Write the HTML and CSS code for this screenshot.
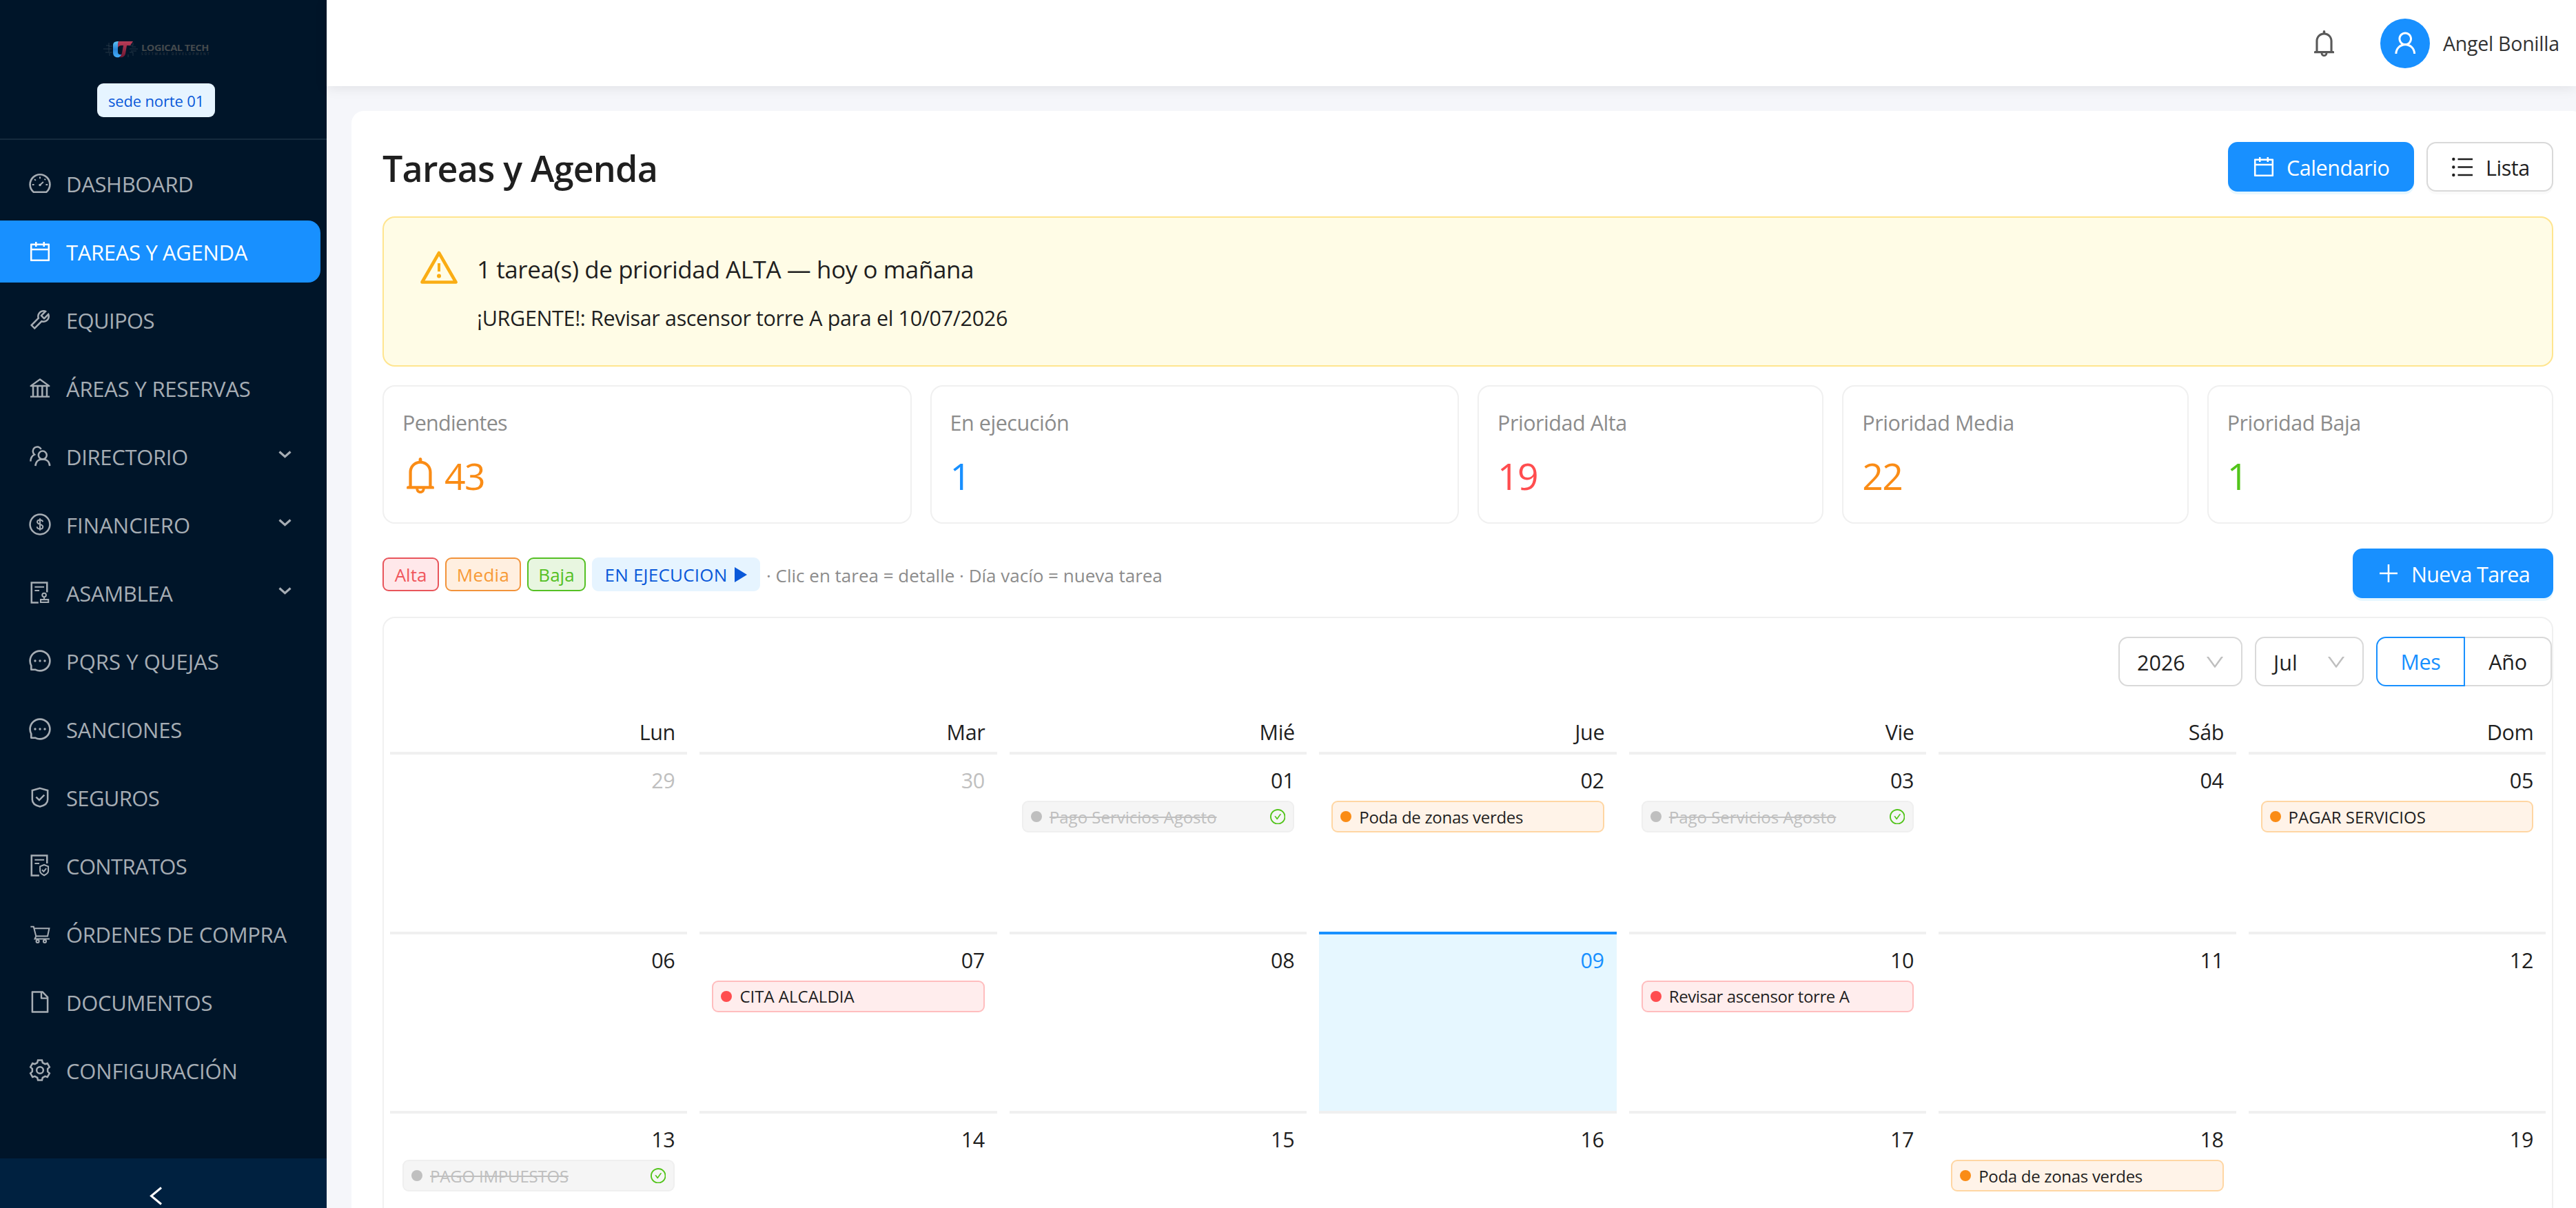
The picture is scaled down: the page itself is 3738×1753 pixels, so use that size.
FILE: index.html
```
<!DOCTYPE html>
<html lang="es">
<head>
<meta charset="utf-8">
<title>Tareas y Agenda</title>
<link rel="stylesheet" href="styles.css">
</head>
<body>
<svg class="sprite" aria-hidden="true">
  <symbol id="i-calendar" viewBox="0 0 1024 1024"><path d="M880 184H712v-64c0-4.400-3.600-8-8-8h-56c-4.400 0-8 3.600-8 8v64H384v-64c0-4.400-3.600-8-8-8h-56c-4.400 0-8 3.600-8 8v64H144c-17.700 0-32 14.300-32 32v664c0 17.700 14.300 32 32 32h736c17.700 0 32-14.300 32-32V216c0-17.700-14.300-32-32-32zm-40 656H184V460h656v380zM184 392V256h128v48c0 4.400 3.600 8 8 8h56c4.400 0 8-3.600 8-8v-48h256v48c0 4.400 3.600 8 8 8h56c4.400 0 8-3.600 8-8v-48h128v136H184z"/></symbol>
  <symbol id="i-bell" viewBox="176 72 672 880"><path d="M816 768h-24V428c0-141.100-104.300-257.800-240-277.200V112c0-22.100-17.900-40-40-40s-40 17.900-40 40v38.800C336.300 170.200 232 286.900 232 428v340h-24c-17.700 0-32 14.300-32 32v32c0 4.400 3.600 8 8 8h216c0 61.800 50.200 112 112 112s112-50.200 112-112h216c4.400 0 8-3.600 8-8v-32c0-17.700-14.300-32-32-32zM512 888c-26.500 0-48-21.500-48-48h96c0 26.500-21.500 48-48 48zM304 768V428c0-55.600 21.600-107.800 60.900-147.100S456.400 220 512 220c55.600 0 107.800 21.600 147.100 60.900S720 372.400 720 428v340H304z"/></symbol>
  <symbol id="i-check" viewBox="64 64 896 896"><path d="M699 353h-46.900c-10.200 0-19.900 4.900-25.900 13.300L469 584.300l-71.200-98.800c-6-8.300-15.600-13.300-25.900-13.300H325c-6.500 0-10.300 7.400-6.500 12.700l124.600 172.800a31.800 31.800 0 0 0 51.700 0l210.600-292c3.900-5.300.1-12.700-6.400-12.700z"/><path d="M512 64C264.600 64 64 264.600 64 512s200.600 448 448 448 448-200.600 448-448S759.400 64 512 64zm0 820c-205.400 0-372-166.600-372-372s166.600-372 372-372 372 166.600 372 372-166.600 372-372 372z"/></symbol>
  <symbol id="i-down" viewBox="128 256 768 512"><path d="M884 256h-75c-5.100 0-9.900 2.500-12.900 6.600L512 654.200 227.900 262.600c-3-4.100-7.800-6.600-12.900-6.600h-75c-6.500 0-10.300 7.400-6.500 12.700l352.600 486.100c12.800 17.600 39 17.600 51.700 0l352.600-486.100c3.900-5.300.1-12.700-6.400-12.700z"/></symbol>
  <symbol id="i-message" viewBox="0 0 1024 1024"><path d="M464 512a48 48 0 1 0 96 0 48 48 0 1 0-96 0zm200 0a48 48 0 1 0 96 0 48 48 0 1 0-96 0zm-400 0a48 48 0 1 0 96 0 48 48 0 1 0-96 0z"/><path d="M925.200 338.400c-22.600-53.700-55-101.900-96.300-143.300a444.350 444.350 0 0 0-143.300-96.300C630.600 75.700 572.200 64 512 64h-2c-60.600.3-119.300 12.300-174.500 35.900a445.350 445.350 0 0 0-142 96.500c-40.900 41.300-73 89.300-95.200 142.800-23 55.400-34.600 114.300-34.300 174.900A449.400 449.400 0 0 0 112 714v152a46 46 0 0 0 46 46h152.100A449.400 449.400 0 0 0 510 960h2.100c59.900 0 118-11.600 172.700-34.300a444.480 444.480 0 0 0 142.800-95.200c41.300-40.900 73.800-88.700 96.500-142 23.600-55.200 35.600-113.900 35.900-174.500.3-60.900-11.500-120-34.800-175.600zm-151.100 438C704 845.800 611 884 512 884h-1.700c-60.300-.3-120.200-15.300-173.100-43.500l-8.400-4.500H188V695.200l-4.500-8.400C155.300 633.900 140.300 574 140 513.700c-.4-99.700 37.700-193.300 107.600-263.800 69.800-70.500 163.100-109.500 262.800-109.900h1.700c50 0 98.500 9.700 144.200 28.900 44.600 18.700 84.600 45.600 119 80 34.300 34.300 61.300 74.400 80 119 19.400 46.200 29.100 95.200 28.900 145.800-.6 99.600-39.700 192.900-110.100 262.700z"/></symbol>
</svg>

<div class="app">
  <aside class="sidebar">
    <div class="brand">
      <svg class="brand-logo" viewBox="0 0 160 30">
        <defs>
          <linearGradient id="blue" x1="0" y1="0" x2="0" y2="1"><stop offset="0" stop-color="#5cc4f5"/><stop offset=".5" stop-color="#2b84d6"/><stop offset="1" stop-color="#43aefa"/></linearGradient>
          <linearGradient id="red" x1="0" y1="0" x2="0" y2="1"><stop offset="0" stop-color="#b83d58"/><stop offset="1" stop-color="#6d1631"/></linearGradient>
        </defs>
        <g fill="none" stroke="#2c3d4d" stroke-width=".8">
          <path d="M3 15h12M7 10h4v5M6 20h5v-5M11 6v5h5M12 25v-5h4M41 15h12M41 10h5V6M44 12h6M41 20h5v5M43 18h8M39 23v4"/>
        </g>
        <path d="M25 4c-6 0-8 2-8 6v10c0 6 4 8 9 7l5-4c-5 1-7 0-7-4V9z" fill="url(#blue)"/>
        <path d="M25 4h21l-4 6h-5l-2 12c-1 4-4 6-9 5 2-1 3-3 4-6l2-11h-3c-2 0-4 1-5 3 0-4 0-7 1-9z" fill="url(#red)"/>
        <text class="brand-name" x="58" y="18" textLength="98" lengthAdjust="spacingAndGlyphs">LOGICAL TECH</text>
        <text class="brand-sub" x="58" y="23.500" textLength="98">SOFTWARE DEVELOPMENT</text>
      </svg>
      <span class="site-tag">sede norte 01</span>
    </div>
    <nav class="menu">
      <a class="item"><svg class="ico" viewBox="0 0 1024 1024"><path d="M924.800 385.600a446.700 446.700 0 0 0-96-142.400 446.700 446.700 0 0 0-142.400-96C631.100 123.800 572.500 112 512 112s-119.100 11.800-174.400 35.200a446.700 446.700 0 0 0-142.400 96 446.700 446.700 0 0 0-96 142.400C75.800 440.900 64 499.500 64 560c0 132.700 58.300 257.700 159.900 343.100l1.700 1.400c5.800 4.800 13.100 7.500 20.600 7.500h531.700c7.500 0 14.800-2.700 20.600-7.500l1.700-1.400C901.700 817.700 960 692.700 960 560c0-60.500-11.900-119.100-35.200-174.400zM761.400 836H262.600A371.120 371.120 0 0 1 140 560c0-99.400 38.700-192.800 109-263 70.300-70.300 163.700-109 263-109 99.400 0 192.800 38.700 263 109 70.300 70.300 109 163.700 109 263 0 105.600-44.500 205.500-122.600 276z"/><g class="line thin"><path d="M512 242v80M192 570h80M752 570h80M286 345l50 50M510 585l140-130M700 372l38-38"/></g><circle cx="512" cy="585" r="50"/></svg><span>DASHBOARD</span></a>
      <a class="item active"><svg class="ico"><use href="#i-calendar"/></svg><span>TAREAS Y AGENDA</span></a>
      <a class="item tight"><svg class="ico" viewBox="0 0 1024 1024"><path d="M876.600 239.500c-.5-.9-1.200-1.800-2-2.500-5-5-13.100-5-18.100 0L684.200 409.300l-67.900-67.900L788.700 169c.8-.8 1.400-1.600 2-2.500 3.600-6.100 1.600-13.900-4.500-17.500-98.200-58-226.800-44.700-311.300 39.700-67 67-89.200 162-66.500 247.400l-293 293c-3 3-2.800 7.900.3 11l169.700 169.700c3.100 3.100 8.100 3.300 11 .3l292.900-292.900c85.500 22.800 180.500.7 247.600-66.400 84.400-84.500 97.700-213.100 39.700-311.300zM786 499.800c-58.100 58.100-145.300 69.300-214.600 33.600l-8.800 8.800-.1-.1-274 274.100-79.200-79.200 230.100-230.100s0 .1.1.1l52.800-52.800c-35.700-69.300-24.500-156.500 33.600-214.600a184.200 184.200 0 0 1 144-53.500L537 318.900a32.050 32.050 0 0 0 0 45.300l124.500 124.500a32.050 32.050 0 0 0 45.300 0l132.800-132.800c3.700 51.800-14.400 104.800-53.600 143.900z"/></svg><span>EQUIPOS</span></a>
      <a class="item wide"><svg class="ico" viewBox="0 0 1024 1024"><path d="M894 462c30.900 0 43.800-39.700 18.700-58L530.800 126.200a31.810 31.810 0 0 0-37.600 0L111.300 404c-25.100 18.200-12.200 58 18.800 58H192v374h-72c-4.400 0-8 3.600-8 8v52c0 4.400 3.600 8 8 8h784c4.400 0 8-3.600 8-8v-52c0-4.400-3.600-8-8-8h-72V462h62zM512 196.700l271.100 197.200H240.900L512 196.700zM264 462h117v374H264V462zm189 0h117v374H453V462zm307 374H642V462h118v374z"/></svg><span>ÁREAS Y RESERVAS</span></a>
      <a class="item"><svg class="ico" viewBox="0 0 1024 1024"><g class="line"><circle cx="620" cy="470" r="170"/><path d="M325 912C335 740 450 640 620 640S905 740 915 912M560 225A180 180 0 1 0 285 445C190 490 130 600 124 725"/></g></svg><span>DIRECTORIO</span><svg class="chev" viewBox="0 0 19 11"><path d="M1.500 1.500 9.500 8.700 17.500 1.500"/></svg></a>
      <a class="item wider"><svg class="ico" viewBox="0 0 1024 1024"><g class="line"><circle cx="512" cy="512" r="410"/></g><g class="line thin"><path d="M630 405C620 350 575 325 512 325c-65 0-112 32-112 88 0 120 232 70 232 195 0 62-52 92-120 92s-118-35-122-95M512 262v500"/></g></svg><span>FINANCIERO</span><svg class="chev" viewBox="0 0 19 11"><path d="M1.500 1.500 9.500 8.700 17.500 1.500"/></svg></a>
      <a class="item"><svg class="ico" viewBox="0 0 1024 1024"><g class="line"><path d="M450 924H164V100h640v400"/></g><g class="line thin"><path d="M295 280h390M295 425h190M685 690v105M540 800h320v112H540z"/><circle cx="685" cy="615" r="80"/></g></svg><span>ASAMBLEA</span><svg class="chev" viewBox="0 0 19 11"><path d="M1.500 1.500 9.500 8.700 17.500 1.500"/></svg></a>
      <a class="item wider"><svg class="ico"><use href="#i-message"/></svg><span>PQRS Y QUEJAS</span></a>
      <a class="item wide"><svg class="ico"><use href="#i-message"/></svg><span>SANCIONES</span></a>
      <a class="item tight"><svg class="ico" viewBox="0 0 1024 1024"><g class="line"><path d="M512 138 830 226v380c0 170-130 250-318 292C324 856 194 776 194 606V226zM352 500l130 128 210-210"/></g></svg><span>SEGUROS</span></a>
      <a class="item tight"><svg class="ico" viewBox="0 0 1024 1024"><g class="line"><path d="M480 924H164V100h640v330"/></g><g class="line thin"><path d="M295 280h390M295 425h190M685 482 855 550v190c0 82-76 130-170 178-94-48-170-96-170-178V550zM595 690l70 68 110-128"/></g></svg><span>CONTRATOS</span></a>
      <a class="item"><svg class="ico" viewBox="0 0 1024 1024"><g class="line thin"><path d="M124 222h125l105 410M275 290h618l-66 320H350L300 728h610"/><circle cx="415" cy="822" r="58"/><circle cx="710" cy="822" r="58"/></g></svg><span>ÓRDENES DE COMPRA</span></a>
      <a class="item"><svg class="ico" viewBox="0 0 1024 1024"><path d="M854.600 288.600L639.400 73.400c-6-6-14.100-9.400-22.600-9.400H192c-17.700 0-32 14.300-32 32v832c0 17.700 14.300 32 32 32h640c17.700 0 32-14.300 32-32V311.300c0-8.500-3.400-16.700-9.400-22.700zM790.200 326H602V137.800L790.200 326zm1.800 562H232V136h302v216a42 42 0 0 0 42 42h216v494z"/></svg><span>DOCUMENTOS</span></a>
      <a class="item wide"><svg class="ico" viewBox="0 0 1024 1024"><g class="line" transform="translate(512 512)"><path d="M-109-311-84-412H84L109-311 211-250 307-284 393-130 318-58V58L393 130 307 284 211 250 109 311 84 412H-84L-109 311-211 250-307 284-393 130-318 58V-58L-393-130-307-284-211-250z"/><circle r="138"/></g></svg><span>CONFIGURACIÓN</span></a>
    </nav>
    <div class="collapse"><svg viewBox="0 0 18 27"><path d="M17 1.500 2.500 13.500 17 25.500"/></svg></div>
  </aside>

  <div class="main">
    <header class="topbar">
      <svg class="top-bell"><use href="#i-bell"/></svg>
      <span class="avatar"><svg viewBox="0 0 1024 1024"><path d="M858.500 763.600a374 374 0 0 0-80.600-119.500 375.630 375.630 0 0 0-119.500-80.600c-.4-.2-.8-.3-1.200-.5C719.500 518 760 444.700 760 362c0-137-111-248-248-248S264 225 264 362c0 82.700 40.500 156 102.800 201.100-.4.2-.8.3-1.200.5-44.800 18.900-85 46-119.500 80.600a375.630 375.630 0 0 0-80.600 119.500A371.700 371.700 0 0 0 136 901.800a8 8 0 0 0 8 8.200h60c4.400 0 7.900-3.500 8-7.800 2-77.200 33-149.500 87.800-204.300 56.700-56.700 132-87.900 212.200-87.900s155.500 31.200 212.200 87.900C779 752.700 810 825 812 902.200c.1 4.400 3.600 7.800 8 7.800h60a8 8 0 0 0 8-8.200c-1-47.800-10.900-94.300-29.500-138.200zM512 534c-45.900 0-89.100-17.900-121.600-50.400S340 407.900 340 362c0-45.900 17.900-89.100 50.400-121.600S466.100 190 512 190s89.100 17.900 121.600 50.400S684 316.100 684 362c0 45.900-17.900 89.100-50.400 121.600S557.900 534 512 534z"/></svg></span>
      <span class="user">Angel Bonilla</span>
    </header>

    <section class="panel">
      <div class="title-row">
        <h1>Tareas y Agenda</h1>
        <div class="views">
          <button class="btn primary calendar-btn"><svg class="ico"><use href="#i-calendar"/></svg><span>Calendario</span></button>
          <button class="btn list-btn"><svg class="list-ico" viewBox="0 0 30 30"><path d="M8.500 4H30M8.500 15.500H30M8.500 27H30"/><circle cx="2.300" cy="4" r="2.200"/><circle cx="2.300" cy="15.500" r="2.200"/><circle cx="2.300" cy="27" r="2.200"/></svg><span>Lista</span></button>
        </div>
      </div>

      <div class="alert">
        <svg class="warn" viewBox="0 0 54 48"><path class="tri" d="M27 3 51.500 45.500H2.500z"/><path class="mark" d="M27 18v12"/><circle cx="27" cy="36.500" r="3"/></svg>
        <div class="alert-text">
          <p class="alert-title">1 tarea(s) de prioridad ALTA — hoy o mañana</p>
          <p class="alert-body">¡URGENTE!: Revisar ascensor torre A para el 10/07/2026</p>
        </div>
      </div>

      <div class="stats">
        <div class="stat"><p>Pendientes</p><div class="num orange"><svg><use href="#i-bell"/></svg>43</div></div>
        <div class="stat"><p>En ejecución</p><div class="num blue">1</div></div>
        <div class="stat"><p>Prioridad Alta</p><div class="num red">19</div></div>
        <div class="stat"><p>Prioridad Media</p><div class="num orange">22</div></div>
        <div class="stat"><p>Prioridad Baja</p><div class="num green">1</div></div>
      </div>

      <div class="legend">
        <span class="tag high">Alta</span>
        <span class="tag mid">Media</span>
        <span class="tag low">Baja</span>
        <span class="tag run">EN EJECUCION<svg viewBox="0 0 18 22"><path d="M0 0 18 11 0 22z"/></svg></span>
        <span class="hint">· Clic en tarea = detalle · Día vacío = nueva tarea</span>
        <button class="btn primary new-btn"><svg class="plus" viewBox="0 0 26 26"><path d="M13 0V26M0 13H26"/></svg><span>Nueva Tarea</span></button>
      </div>

      <div class="calendar">
        <div class="cal-head">
          <div class="select year">2026<svg><use href="#i-down"/></svg></div>
          <div class="select month">Jul<svg><use href="#i-down"/></svg></div>
          <div class="modes"><span class="mode on">Mes</span><span class="mode">Año</span></div>
        </div>
        <div class="grid week">
          <span>Lun</span><span>Mar</span><span>Mié</span><span>Jue</span><span>Vie</span><span>Sáb</span><span>Dom</span>
        </div>
        <div class="grid days">
          <div class="day out"><b>29</b></div>
          <div class="day out"><b>30</b></div>
          <div class="day"><b>01</b><div class="event done"><i></i><s>Pago Servicios Agosto</s><svg><use href="#i-check"/></svg></div></div>
          <div class="day"><b>02</b><div class="event media"><i></i>Poda de zonas verdes</div></div>
          <div class="day"><b>03</b><div class="event done"><i></i><s>Pago Servicios Agosto</s><svg><use href="#i-check"/></svg></div></div>
          <div class="day"><b>04</b></div>
          <div class="day"><b>05</b><div class="event media caps"><i></i>PAGAR SERVICIOS</div></div>
          <div class="day"><b>06</b></div>
          <div class="day"><b>07</b><div class="event alta caps"><i></i>CITA ALCALDIA</div></div>
          <div class="day"><b>08</b></div>
          <div class="day today"><b>09</b></div>
          <div class="day"><b>10</b><div class="event alta"><i></i>Revisar ascensor torre A</div></div>
          <div class="day"><b>11</b></div>
          <div class="day"><b>12</b></div>
          <div class="day"><b>13</b><div class="event done tight"><i></i><s>PAGO IMPUESTOS</s><svg><use href="#i-check"/></svg></div></div>
          <div class="day"><b>14</b></div>
          <div class="day"><b>15</b></div>
          <div class="day"><b>16</b></div>
          <div class="day"><b>17</b></div>
          <div class="day"><b>18</b><div class="event media"><i></i>Poda de zonas verdes</div></div>
          <div class="day"><b>19</b></div>
        </div>
      </div>
    </section>
  </div>
</div>
</body>
</html>
```
FILE: styles.css
```
* { box-sizing: border-box; }

body {
  margin: 0;
  font-family: "Open Sans", "Noto Sans", sans-serif;
  font-size: 30.5px;
  letter-spacing: -0.35px;
  color: #1f1f1f;
  background: #f5f6fa;
  white-space: nowrap;
}

h1, p { margin: 0; }
svg { display: block; flex: none; fill: currentColor; }
.sprite { position: absolute; width: 0; height: 0; }
.ico { width: 36px; height: 36px; }
.line { fill: none; stroke: currentColor; stroke-width: 72; }
.thin { stroke-width: 58; }

.app { display: flex; height: 1753px; overflow: hidden; }

/* Sidebar */
.sidebar {
  flex: none;
  display: flex;
  flex-direction: column;
  width: 474px;
  height: 1789px;
  background: #001529;
  color: #a6adb4;
}
.brand {
  display: flex;
  flex-direction: column;
  align-items: center;
  gap: 35px;
  height: 203px;
  padding: 56px 21px 0 0;
  border-bottom: 2px solid #152a3d;
}
.brand-logo { width: 160px; height: 30px; }
.brand-name { font: 700 12.5px "Open Sans", sans-serif; fill: #454a4d; }
.brand-sub { font: 600 4.6px "Open Sans", sans-serif; fill: #2c3843; }
.site-tag {
  width: 171px;
  height: 49px;
  border-radius: 9px;
  background: #e6f4ff;
  color: #0958d9;
  font-size: 22px;
  line-height: 50px;
  letter-spacing: -0.15px;
  text-align: center;
}
.menu { display: flex; flex-direction: column; gap: 9px; padding: 18px 9px 0 0; }
.item {
  display: flex;
  align-items: center;
  height: 90px;
  padding: 0 42px 0 40px;
  border-radius: 0 18px 18px 0;
  font-size: 31px;
  letter-spacing: -0.33px;
}
.item span { margin-left: 20px; padding-top: 2px; }
.item.active { background: #1890ff; color: #fff; }
.item.tight { letter-spacing: -0.65px; }
.item.wide { letter-spacing: -0.2px; }
.item.wider { letter-spacing: 0.05px; }
.chev { width: 19px; height: 11px; margin: 0 0 5px auto; fill: none; stroke: currentColor; stroke-width: 3.2; }
.collapse {
  display: flex;
  align-items: center;
  justify-content: center;
  height: 108px;
  margin-top: auto;
  padding-right: 22px;
  background: #002140;
}
.collapse svg { width: 18px; height: 27px; fill: none; stroke: #fff; stroke-width: 3; }

/* Header */
.main { flex: 1; min-width: 0; }
.topbar {
  display: flex;
  align-items: center;
  justify-content: flex-end;
  height: 125px;
  background: #fff;
  box-shadow: 0 2px 18px rgba(0, 0, 0, 0.09);
}
.top-bell { width: 29px; height: 38px; margin-right: 67px; color: #595959; }
.avatar {
  display: flex;
  align-items: center;
  justify-content: center;
  width: 72px;
  height: 72px;
  border-radius: 50%;
  background: #1890ff;
  color: #fff;
}
.avatar svg { width: 40.5px; height: 40.5px; }
.user { width: 193px; margin-left: 19px; padding-top: 1px; font-size: 28.5px; letter-spacing: -0.25px; color: #333; }

/* Panel */
.panel {
  width: 3240px;
  height: 1700px;
  margin: 36px 0 0 36px;
  padding: 45px;
  border-radius: 18px;
  background: #fff;
}
.title-row { display: flex; justify-content: space-between; height: 72px; }
h1 { padding-top: 3px; font-size: 52px; font-weight: 600; line-height: 70px; letter-spacing: -0.8px; }
.views { display: flex; gap: 18px; }
.btn {
  display: flex;
  align-items: center;
  height: 72px;
  padding: 0;
  border: 2px solid #d9d9d9;
  border-radius: 14px;
  background: #fff;
  box-shadow: 0 4px 0 rgba(0, 0, 0, 0.02);
  color: inherit;
  font: inherit;
  letter-spacing: -0.45px;
}
.btn.primary { border-color: #1890ff; background: #1890ff; box-shadow: 0 4px 0 rgba(5, 175, 255, 0.1); color: #fff; }
.btn span { padding-top: 1px; }
.calendar-btn { width: 270px; padding-left: 32px; }
.calendar-btn span { margin-left: 15px; }
.list-btn { width: 184px; padding-left: 35px; }
.list-btn span { margin-left: 19px; }
.list-ico { width: 30px; height: 30px; }
.list-ico path { fill: none; stroke: currentColor; stroke-width: 2.6; }

.alert {
  display: flex;
  gap: 28px;
  margin-top: 36px;
  padding: 48px 53px 44px;
  border: 2px solid #ffe58f;
  border-radius: 18px;
  background: #fffce6;
}
.warn { width: 54px; height: 48px; color: #faad14; }
.warn .tri { fill: none; stroke: currentColor; stroke-width: 4.6; stroke-linejoin: round; }
.warn .mark { stroke: currentColor; stroke-width: 4; }
.alert-text { display: flex; flex-direction: column; gap: 20px; padding-top: 2px; line-height: 50px; }
.alert-title { font-size: 35px; letter-spacing: -0.42px; }

.stats {
  display: grid;
  grid-template-columns: 767fr 767fr 502fr 502fr 502fr;
  gap: 27px;
  margin-top: 27px;
}
.stat { height: 201px; padding: 27px; border: 2px solid #f0f0f0; border-radius: 18px; }
.stat p { line-height: 50px; color: #8c8c8c; letter-spacing: -0.45px; }
.stat:first-child p { letter-spacing: -0.7px; }
.num { display: flex; align-items: center; margin-top: 13px; font-size: 53.5px; line-height: 80px; letter-spacing: -1.6px; }
.num svg { width: 40px; height: 52px; margin: 0 15px 2px 6px; }
.orange { color: #fa8c16; }
.blue { color: #1890ff; }
.red { color: #ff4d4f; }
.green { color: #52c41a; }

.legend { display: flex; align-items: center; gap: 9px; height: 72px; margin-top: 36px; font-size: 26px; letter-spacing: 0; }
.tag {
  display: flex;
  align-items: center;
  justify-content: center;
  height: 49px;
  margin-top: 3px;
  border: 2px solid;
  border-radius: 9px;
}
.high { width: 82px; color: #f0565c; background: #ffe8ea; border-color: #e8555b; }
.mid { width: 110px; color: #f79a36; background: #ffefe0; border-color: #f2933a; letter-spacing: 0.3px; }
.low { width: 85px; color: #55c024; background: #e8f6e0; border-color: #55c024; }
.run { width: 244px; color: #0958d9; background: #e6f4ff; border-color: #e6f4ff; letter-spacing: 0.2px; }
.run svg { width: 18px; height: 22px; margin-left: 11px; }
.hint { padding-top: 5px; color: #8c8c8c; }
.new-btn { width: 291px; margin-left: auto; padding-left: 37px; font-size: 30.5px; letter-spacing: -0.65px; }
.new-btn span { margin-left: 20px; }
.plus { width: 26px; height: 26px; }
.plus path { stroke: currentColor; stroke-width: 2.6; }

/* Calendar */
.calendar { height: 900px; margin-top: 27px; border: 2px solid #f0f0f0; border-radius: 18px; }
.cal-head { display: flex; justify-content: flex-end; gap: 18px; padding-top: 27px; }
.select {
  display: flex;
  align-items: center;
  justify-content: space-between;
  height: 72px;
  padding: 1px 26px 0 25px;
  border: 2px solid #d9d9d9;
  border-radius: 14px;
  letter-spacing: 0;
}
.select svg { width: 24px; height: 16px; color: #bfbfbf; }
.year { width: 180px; }
.month { width: 158px; }
.modes { display: flex; }
.mode {
  width: 126px;
  height: 72px;
  border: 2px solid #d9d9d9;
  border-left: 0;
  border-radius: 0 14px 14px 0;
  line-height: 69px;
  text-align: center;
}
.mode.on { width: 129px; border: 2px solid #1890ff; border-radius: 14px 0 0 14px; color: #1890ff; }
.grid { display: grid; grid-template-columns: repeat(7, minmax(0, 1fr)); }
.week { margin-top: 41px; height: 54px; line-height: 50px; text-align: right; }
.week span { padding-right: 26.5px; }
.day { height: 260.5px; margin: 0 9px; padding: 12px 18px 0; border-top: 4px solid #f0f0f0; }
.day b { display: block; font-weight: 400; line-height: 50px; text-align: right; }
.day.out b { color: #bfbfbf; }
.day.today { border-color: #1890ff; background: #e6f7ff; }
.day.today b { color: #1890ff; }
.event {
  display: flex;
  align-items: center;
  height: 46px;
  margin-top: 5px;
  padding: 0 11px;
  border: 2px solid;
  border-radius: 9px;
  font-size: 24px;
  letter-spacing: -0.3px;
}
.event i { width: 16px; height: 16px; margin-right: 11px; border-radius: 50%; }
.event svg { width: 22.5px; height: 22.5px; margin-left: auto; color: #52c41a; }
.done { color: #bfbfbf; background: #f5f5f5; border-color: #efefef; letter-spacing: 0; }
.done i { background: #bfbfbf; }
.media { background: #fff3e8; border-color: #ffd6a3; }
.media i { background: #fa8c16; }
.alta { background: #ffeded; border-color: #ffbdbe; letter-spacing: -0.38px; }
.alta i { background: #ff4d4f; }
.event.caps { letter-spacing: 0; }
.event.tight { letter-spacing: -0.2px; }
```
